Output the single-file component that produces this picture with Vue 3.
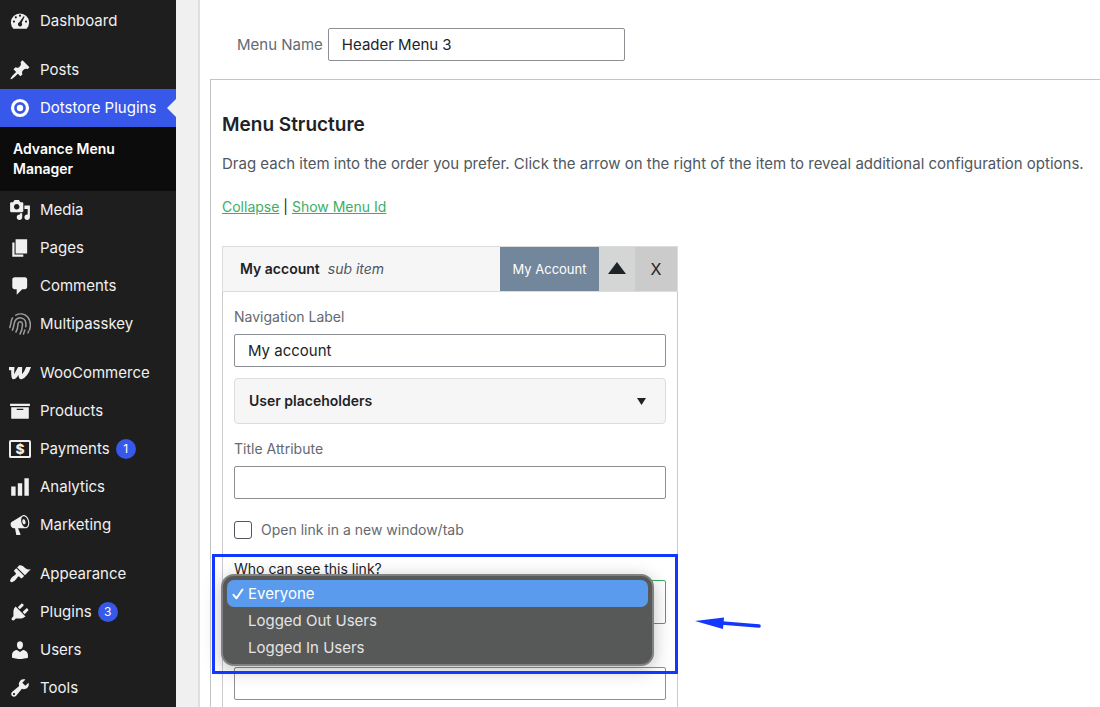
<script setup>
import { ref } from 'vue'

const groups = [
  [{ name: 'Dashboard', icon: 'dashboard' }],
  [
    { name: 'Posts', icon: 'pin' },
    { name: 'Dotstore Plugins', icon: 'target', active: true, child: 'Advance Menu Manager' },
    { name: 'Media', icon: 'media' },
    { name: 'Pages', icon: 'pages' },
    { name: 'Comments', icon: 'comments' },
    { name: 'Multipasskey', icon: 'fingerprint' },
  ],
  [
    { name: 'WooCommerce', icon: 'woo' },
    { name: 'Products', icon: 'products' },
    { name: 'Payments', icon: 'payments', count: 1 },
    { name: 'Analytics', icon: 'analytics' },
    { name: 'Marketing', icon: 'marketing' },
  ],
  [
    { name: 'Appearance', icon: 'appearance' },
    { name: 'Plugins', icon: 'plugins', count: 3 },
    { name: 'Users', icon: 'users' },
    { name: 'Tools', icon: 'tools' },
  ],
]

const paths = {
  dashboard: 'M3.9 17A8.300 8.300 0 1 1 16.100 17ZM10 4.200a1 1 0 1 0 0 2 1 1 0 0 0 0-2ZM6.200 5.700a1 1 0 1 0 0 2 1 1 0 0 0 0-2ZM4.500 9.500a1 1 0 1 0 0 2 1 1 0 0 0 0-2ZM15.500 9.500a1 1 0 1 0 0 2 1 1 0 0 0 0-2ZM13.300 5.600 9.600 10.900C8.100 11.500 7.800 13.100 8.500 14.200 9.400 15.500 11.600 15.200 11.900 13.400 12 12.700 11.800 12.200 11.500 11.700L14.200 6.200Z',
  pin: 'M10.440 3.020l1.820-1.820 6.360 6.350-1.830 1.820c-1.050-.68-2.480-.57-3.410.36l-.75.75c-.92.93-1.040 2.350-.35 3.410l-1.830 1.820-2.410-2.410-2.800 2.790c-.42.42-3.380 2.710-3.800 2.290s1.860-3.390 2.280-3.810l2.790-2.790L4.100 9.360l1.830-1.820c1.050.69 2.480.57 3.400-.36l.75-.75c.93-.92 1.050-2.350.36-3.410z',
  media: 'M13 11V4c0-.55-.45-1-1-1h-1.670L9 1H5L3.670 3H2c-.55 0-1 .45-1 1v7c0 .55.45 1 1 1h10c.55 0 1-.45 1-1zM7 4.500c1.380 0 2.500 1.120 2.500 2.500S8.380 9.500 7 9.500 4.500 8.380 4.500 7 5.620 4.500 7 4.500zM14 6h5v10.500c0 1.380-1.120 2.500-2.500 2.500S14 17.880 14 16.500s1.120-2.500 2.500-2.500c.17 0 .34.02.5.05V9h-3V6zm-4 8.050V13h2v3.500c0 1.380-1.120 2.500-2.500 2.500S7 17.880 7 16.500 8.120 14 9.500 14c.17 0 .34.02.5.05z',
  pages: 'M6 15V2h10.500v13H6zm-1 1h8v2H3V5h2v11z',
  comments: 'M5 2h9.500c1.100 0 2 .9 2 2v7c0 1.100-.9 2-2 2h-2.500l-5 5v-5H5c-1.100 0-2-.9-2-2V4c0-1.100.9-2 2-2z',
  products: 'M19 3.500v2H1v-2h18zM2 6.500h16v10.500H2V6.500zm11 2.500V8H7v1h6z',
  analytics: 'M2 9.500h4V18H2ZM8 6.500h4V18H8ZM14 2h4v16h-4Z',
  woo: 'M0 4.600H5L4.600 11.200 8.300 4.600H12L11.800 11.200Q14 9 15.600 4.600H20Q17 14 11.500 15.600 8.800 16 8.600 11.800 6.500 15.600 3.800 15.600 1.700 15.600 2 7.400H0Z',
  marketing: 'M18.150 5.940c.46 1.620.38 3.220-.02 4.480-.42 1.280-1.260 2.180-2.300 2.480-.16.06-.26.06-.4.06-.06.02-.12.02-.18.02-.06.02-.14.02-.22.02h-6.800l2.220 5.500c.02.14-.06.26-.14.34-.08.1-.24.16-.34.16H6.950c-.1 0-.26-.06-.34-.16-.08-.08-.16-.2-.14-.34l-1-5.500H4.250l-.02-.02c-.5.06-1.080-.18-1.540-.62s-.88-1.080-1.060-1.880c-.24-.8-.2-1.560-.02-2.200.18-.62.58-1.080 1.060-1.300l.02-.02 9-5.400c.1-.06.18-.1.24-.16.06-.04.14-.08.24-.12.16-.08.28-.12.5-.18 1.040-.3 2.240.1 3.220.98s1.840 2.240 2.260 3.860zm-2.580 5.980h-.02c.4-.1.74-.34 1.040-.7.58-.7.86-1.760.86-3.040 0-.64-.1-1.300-.28-1.980-.34-1.360-1.020-2.500-1.780-3.240s-1.680-1.100-2.460-.88c-.82.22-1.400.96-1.700 2-.32 1.040-.28 2.360.06 3.720.38 1.360 1 2.500 1.800 3.240.78.74 1.620 1.100 2.480.88zm-2.540-7.080c.22-.04.42-.02.62.04.38.16.76.48 1.020 1s.42 1.200.42 1.780c0 .3-.04.56-.12.8-.18.48-.44.84-.86.94-.34.1-.8-.06-1.140-.4s-.64-.86-.78-1.500c-.18-.62-.12-1.240.02-1.720s.48-.84.82-.94z',
  appearance: 'M14.480 11.060L7.410 3.990l1.500-1.500c.5-.56 2.300-.47 3.510.32 1.210.8 1.430 1.280 2.910 2.100 1.180.64 2.450 1.260 4.450.85zm-.71.71L6.700 4.700 4.930 6.470c-.39.39-.39 1.020 0 1.410l1.060 1.060c.39.39.39 1.030 0 1.420-.6.6-1.430 1.110-2.210 1.690-.35.26-.7.53-1.010.84C1.430 14.230.4 16.080 1.400 17.070c.99 1 2.840-.03 4.180-1.360.31-.31.58-.66.85-1.020.57-.78 1.080-1.610 1.690-2.210.39-.39 1.020-.39 1.410 0l1.060 1.060c.39.39 1.020.39 1.410 0z',
  plugins: 'M13.110 4.360L9.870 7.600 8 5.730l3.240-3.240c.35-.34 1.050-.2 1.560.32.52.51.66 1.210.31 1.550zm-8 1.770l.91-1.120 9.010 9.010-1.190.84c-.71.71-2.630 1.160-3.820 1.160H6.140L4.900 17.260c-.59.59-1.540.59-2.120 0-.59-.58-.59-1.530 0-2.120l1.240-1.240v-3.880c0-1.130.4-3.190 1.090-3.890zm7.260 3.970l3.240-3.240c.34-.35 1.040-.21 1.550.31.52.51.66 1.210.31 1.550l-3.240 3.250z',
  users: 'M10 9.250c-2.270 0-2.730-3.440-2.730-3.440C7 4.020 7.820 2 9.970 2c2.160 0 2.980 2.020 2.710 3.810 0 0-.41 3.440-2.680 3.440zm0 2.570L12.720 10c2.390 0 4.520 2.330 4.520 4.530v2.490s-3.650 1.130-7.240 1.130c-3.650 0-7.240-1.130-7.240-1.130v-2.490c0-2.250 1.940-4.480 4.470-4.480z',
  tools: 'M16.680 9.770c-1.340 1.340-3.300 1.670-4.950.99l-5.410 6.520c-.99.99-2.590.99-3.580 0s-.99-2.590 0-3.570l6.520-5.420c-.68-1.650-.35-3.610.99-4.950 1.280-1.280 3.120-1.620 4.720-1.060l-2.890 2.890 2.820 2.820 2.860-2.870c.53 1.580.18 3.390-1.080 4.650zM3.810 16.210c.4.39 1.040.39 1.430 0 .4-.4.4-1.040 0-1.430-.39-.4-1.030-.4-1.430 0-.39.39-.39 1.030 0 1.430z',
}

const menuName = ref('Header Menu 3')
const navLabel = ref('My account')
const titleAttr = ref('')
const cssClasses = ref('')
const newTab = ref(false)
const visibilityOptions = ['Everyone', 'Logged Out Users', 'Logged In Users']
const visibility = ref('Everyone')
</script>

<template>
  <div class="shell">
    <nav class="sidebar" aria-label="Admin menu">
      <ul v-for="(group, g) in groups" :key="g" class="group">
        <li v-for="item in group" :key="item.name">
          <a href="#" class="row" :class="{ active: item.active }">
            <svg class="icon" viewBox="0 0 20 20" aria-hidden="true">
              <path v-if="paths[item.icon]" :d="paths[item.icon]" fill="currentColor" fill-rule="evenodd" />
              <g v-else-if="item.icon === 'target'">
                <circle cx="10" cy="10" r="6.800" fill="none" stroke="currentColor" stroke-width="2.900" />
                <circle cx="10" cy="10" r="2.900" fill="currentColor" />
              </g>
              <path
                v-else-if="item.icon === 'fingerprint'"
                d="M6.200 1.900C9.500.2 14 .4 17 3.600c2.900 3.600 2.800 7.900 1.700 11.700M.7 13.200C2.200 9.500 1.500 7.200 3.200 4.500M3.100 15.500C5.200 11 4 8.200 6.300 6c2.700-2.600 7.400-1.900 8.600 1.300.5 2 .6 3.400.3 5.200M6.300 17.300c2.100-3.800 1.800-5.600 1.900-7.700.4-2.400 3.700-2.300 4 .2.200 2.700-.2 5.600-2.200 9.300M14.400 15.500l-1.200 3.500M17.300 18l.5-1.500"
                fill="none" stroke="#9a9b9d" stroke-width="1.400" stroke-linecap="round"
              />
              <g v-else-if="item.icon === 'payments'">
                <rect x=".9" y="2.700" width="18.200" height="14.600" rx=".8" fill="none" stroke="currentColor" stroke-width="1.800" />
                <text x="10" y="14.500" text-anchor="middle" font-size="12.500" font-weight="800" fill="currentColor">$</text>
              </g>
            </svg>
            <span>{{ item.name }}</span>
            <span v-if="item.count" class="count">{{ item.count }}</span>
          </a>
          <a v-if="item.child" href="#" class="child">{{ item.child }}</a>
        </li>
      </ul>
    </nav>

    <main class="page">
      <div class="menu-name">
        <label for="menu-name">Menu Name</label>
        <input id="menu-name" v-model="menuName" class="field" type="text" />
      </div>

      <section class="structure">
        <h2>Menu Structure</h2>
        <p class="intro">Drag each item into the order you prefer. Click the arrow on the right of the item to reveal additional configuration options.</p>
        <p class="links"><a href="#">Collapse</a> | <a href="#">Show Menu Id</a></p>

        <article class="item">
          <header class="item-head">
            <strong>My account</strong>
            <em>sub item</em>
            <span class="tag">My Account</span>
            <button type="button" class="toggle" aria-label="Close item settings">
              <svg width="18" height="12" viewBox="0 0 18 12"><path d="M9 0 18 12H0Z" fill="currentColor" /></svg>
            </button>
            <button type="button" class="remove">X</button>
          </header>

          <div class="item-body">
            <label class="caption" for="nav-label">Navigation Label</label>
            <input id="nav-label" v-model="navLabel" class="field" type="text" />
            <button type="button" class="placeholders">
              <span>User placeholders</span>
              <svg width="9" height="7" viewBox="0 0 9 7"><path d="M0 0h9L4.500 7Z" fill="currentColor" /></svg>
            </button>
            <label class="caption" for="title-attr">Title Attribute</label>
            <input id="title-attr" v-model="titleAttr" class="field" type="text" />
            <label class="check"><input v-model="newTab" type="checkbox" />Open link in a new window/tab</label>
            <label class="question" for="visibility">Who can see this link?</label>
            <div class="picker">
              <select id="visibility" v-model="visibility">
                <option v-for="option in visibilityOptions" :key="option">{{ option }}</option>
              </select>
              <ul class="popup" role="listbox" aria-label="Who can see this link?">
                <li
                  v-for="option in visibilityOptions"
                  :key="option"
                  role="option"
                  :aria-selected="visibility === option"
                  :class="{ chosen: visibility === option }"
                  @click="visibility = option"
                >
                  <svg width="12" height="12" viewBox="0 0 12 12" aria-hidden="true">
                    <path v-if="visibility === option" d="M1.500 6.800 4.500 10.300 10.500 1.500" fill="none" stroke="currentColor" stroke-width="2" stroke-linecap="round" stroke-linejoin="round" />
                  </svg>
                  {{ option }}
                </li>
              </ul>
              <div class="highlight"></div>
              <svg class="arrow" width="68" height="16" viewBox="0 0 68 16" aria-hidden="true">
                <path d="M27 7 64 10" stroke="#1238ff" stroke-width="3.500" stroke-linecap="round" />
                <path d="M0 5 29 1.500 28 13Z" fill="#1238ff" />
              </svg>
            </div>
            <input v-model="cssClasses" class="field" type="text" aria-label="CSS classes" />
          </div>
        </article>
      </section>
    </main>
  </div>
</template>

<style>
body {
  margin: 0;
  background: #fff;
}
</style>

<style scoped>
.shell {
  display: flex;
  min-height: 100vh;
  font-family: Inter, "Liberation Sans", sans-serif;
  font-size: 15px;
  line-height: 20px;
  color: #1d2327;
}
.shell *, .shell *::before { box-sizing: border-box; }
input, select, button { font: inherit; color: inherit; margin: 0; }
a { color: inherit; }

.sidebar {
  flex: 0 0 176px;
  display: flex;
  flex-direction: column;
  gap: 11px;
  padding-top: 2px;
  background: #1e1e1e;
  color: #f0f0f1;
}
.group { list-style: none; margin: 0; padding: 0; }
.row {
  position: relative;
  display: flex;
  align-items: center;
  height: 38px;
  padding-left: 9px;
  text-decoration: none;
}
.icon { width: 22px; height: 22px; margin-right: 9px; }
.row.active { background: #3858e9; color: #fff; }
.row.active::before {
  content: "";
  position: absolute;
  right: 0;
  top: 10px;
  border: 9px solid transparent;
  border-right-color: #f0f0f1;
  border-left-width: 0;
}
.count {
  width: 20px;
  height: 20px;
  margin-left: 6px;
  border-radius: 50%;
  background: #3858e9;
  color: #fff;
  font-size: 12px;
  text-align: center;
}
.child {
  display: block;
  padding: 12px 40px 12px 13px;
  background: #0c0c0c;
  color: #fff;
  font-size: 14px;
  font-weight: 600;
  text-decoration: none;
}

.page {
  flex: 1;
  min-width: 0;
  display: flex;
  flex-direction: column;
  border-left: 22px solid #f0f0f1;
  box-shadow: inset 2px 0 #dfdfe0;
  padding: 28px 0 0 12px;
}
.menu-name {
  display: flex;
  align-items: center;
  gap: 5px;
  margin: 0 0 18px 27px;
  color: #646970;
}
.menu-name .field { width: 297px; }
.field {
  display: block;
  width: 100%;
  height: 33px;
  padding: 0 13px;
  border: 1px solid #8c8f94;
  border-radius: 2px;
  background: #fff;
  color: #1d2327;
}
.structure {
  flex: 1;
  display: flex;
  flex-direction: column;
  border: 1px solid #c3c4c7;
  border-width: 1px 0 0 1px;
  padding: 32px 0 0 11px;
}
h2 { margin: 0; font-size: 19px; line-height: 26px; font-weight: 600; }
.intro { margin: 16px 0 0; color: #50575e; white-space: nowrap; }
.links { margin: 23px 0 29px; font-size: 14px; }
.links a { color: #3bae66; }

.item {
  flex: 1;
  display: flex;
  flex-direction: column;
  width: 456px;
}
.item-head {
  display: flex;
  align-items: stretch;
  height: 46px;
  border: 1px solid #dcdcde;
  background: #f6f6f6;
  line-height: 44px;
  font-size: 14px;
}
.item-head strong { margin: 0 8px 0 17px; font-weight: 600; }
.item-head em { color: #50575e; }
.tag {
  margin-left: auto;
  width: 99px;
  background: #72869c;
  color: #fff;
  font-size: 13px;
  text-align: center;
}
.toggle, .remove { border: 0; padding: 0; }
.toggle { width: 36px; background: #d4d6d5; }
.remove { width: 42px; background: #cbcbcb; font-size: 16px; }
.item-body {
  flex: 1;
  border: 1px solid #c9cacc;
  border-width: 0 1px;
  padding: 15px 11px 7px;
}
.caption, .question { display: block; font-size: 14px; }
.caption { margin-bottom: 7px; color: #646970; }
.placeholders {
  display: flex;
  align-items: center;
  justify-content: space-between;
  width: 100%;
  height: 46px;
  margin: 11px 0 15px;
  padding: 0 19px 0 14px;
  border: 1px solid #dcdcde;
  border-radius: 4px;
  background: #f6f6f6;
  font-size: 14px;
  font-weight: 600;
}
.check {
  display: flex;
  align-items: center;
  gap: 9px;
  margin: 21px 0 19px;
  color: #646970;
  font-size: 14px;
}
.check input {
  appearance: none;
  width: 18px;
  height: 18px;
  border: 1px solid #50575e;
  border-radius: 3px;
}
.picker { position: relative; margin: 1px 0 43px; }
select {
  display: block;
  width: 100%;
  height: 44px;
  padding: 0 13px;
  appearance: none;
  border: 1px solid #3bae66;
  border-radius: 2px;
  background: #fff;
}
.popup {
  position: absolute;
  left: -13px;
  right: 12px;
  top: -6px;
  margin: 0;
  padding: 4px 4px 3px;
  list-style: none;
  border: 2px solid #808181;
  border-radius: 13px;
  background: #575958;
  color: #e4e4e4;
  box-shadow: 0 4px 18px rgba(0, 0, 0, 0.25);
}
.popup li {
  display: flex;
  align-items: center;
  gap: 4px;
  height: 27px;
  padding-left: 5px;
  border-radius: 7px;
}
.popup .chosen { background: #5b9bed; color: #fff; }
.highlight {
  position: absolute;
  left: -22px;
  right: -12px;
  top: -26px;
  height: 120px;
  border: 3px solid #1238ff;
  pointer-events: none;
}
.arrow { position: absolute; left: 461px; top: 36px; }
</style>
